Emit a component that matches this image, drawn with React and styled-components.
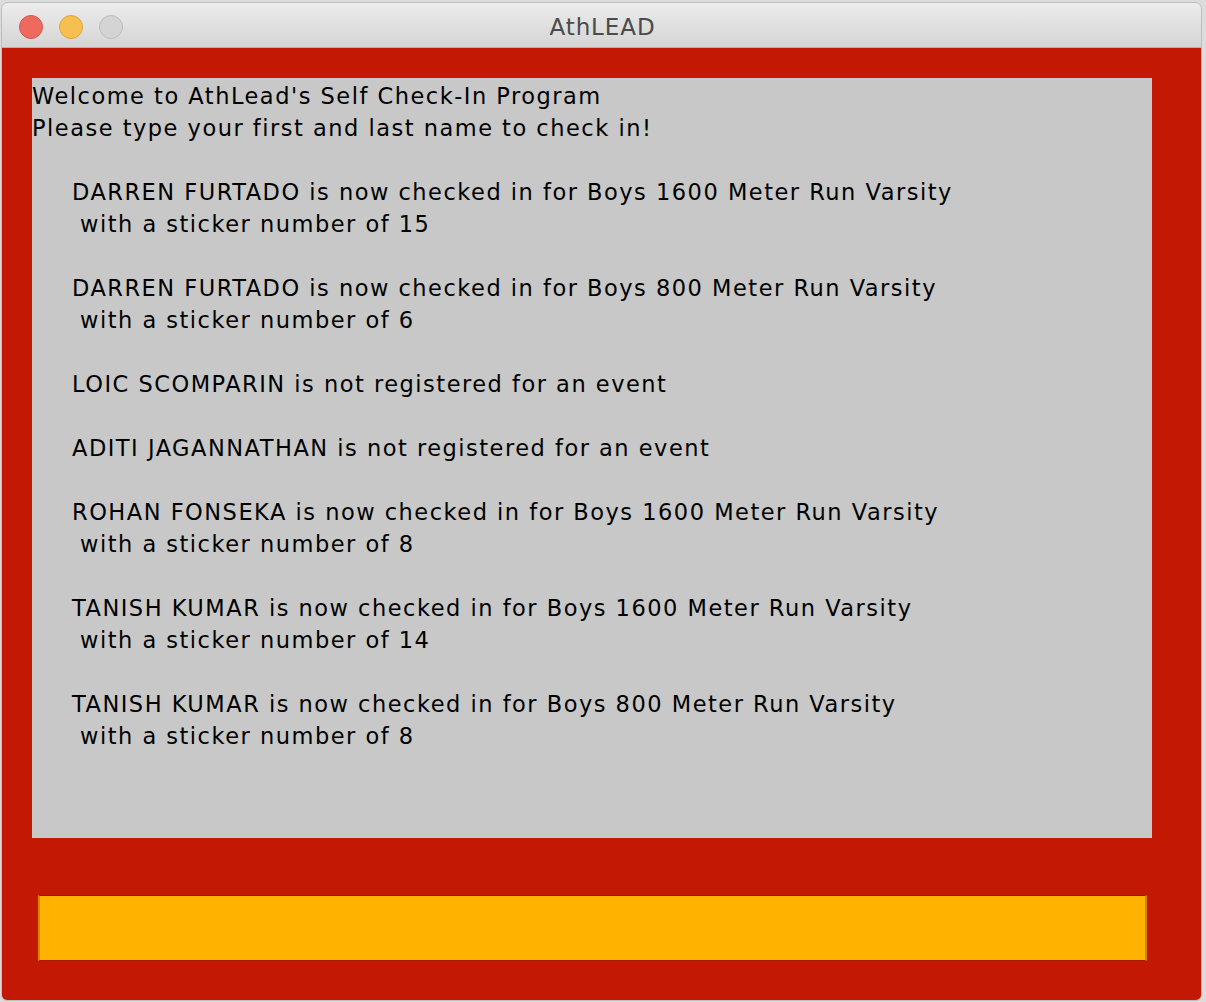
import React from "react";
import styled, { createGlobalStyle } from "styled-components";

const Global = createGlobalStyle`
  html, body { margin: 0; padding: 0; }
  body {
    background: #dcdcdc;
    width: 1206px;
    height: 1002px;
    overflow: hidden;
  }
`;

const Desktop = styled.div`
  display: flex;
  padding: 2px 4px 1px 1px;
  height: 1002px;
  box-sizing: border-box;
`;

const Window = styled.div`
  width: 1201px;
  display: flex;
  flex-direction: column;
  border-radius: 7px 7px 6px 6px;
  border: 1px solid #bdbdbd;
  overflow: hidden;
  box-sizing: border-box;
`;

const TitleBar = styled.div`
  position: relative;
  height: 44px;
  flex: none;
  background: linear-gradient(#ececec, #d5d5d5);
  border-bottom: 1px solid #b4b4b4;
  display: flex;
  align-items: center;
  justify-content: center;
`;

const Lights = styled.div`
  position: absolute;
  left: 17px;
  top: 12px;
  display: flex;
  gap: 16px;
`;

const Light = styled.span`
  width: 24px;
  height: 24px;
  border-radius: 50%;
  box-sizing: border-box;
  background: ${(p) => p.$fill};
  border: 1px solid ${(p) => p.$edge};
`;

const Title = styled.div`
  font-family: "DejaVu Sans", "Liberation Sans", sans-serif;
  font-size: 23px;
  letter-spacing: 0.9px;
  color: #4b4b4b;
  margin: 3px 0 0 2px;
`;

const Body = styled.div`
  flex: 1;
  background: #c21804;
  padding: 30px 49px 40px 30px;
  display: flex;
  flex-direction: column;
`;

const Panel = styled.div`
  width: 1120px;
  height: 760px;
  box-sizing: border-box;
  padding-top: 2px;
  background: #c8c8c8;
  font-family: "DejaVu Sans", "Liberation Sans", sans-serif;
  font-size: 22.5px;
  letter-spacing: 1.5px;
  line-height: 32px;
  color: #000;
  white-space: pre;
`;

const Line = styled.div`
  height: 32px;
  padding-left: ${(p) => p.$indent || 0}px;
`;

const Field = styled.div`
  margin: 57px 0 0 6px;
  width: 1109px;
  height: 66px;
  box-sizing: border-box;
  background: #ffb300;
  border-top: 1px solid #9e1300;
  border-bottom: 1px solid #a31a00;
  border-left: 2px solid #d98300;
  border-right: 2px solid #d98300;
`;

const entries = [
  ["DARREN FURTADO is now checked in for Boys 1600 Meter Run Varsity", "with a sticker number of 15"],
  ["DARREN FURTADO is now checked in for Boys 800 Meter Run Varsity", "with a sticker number of 6"],
  ["LOIC SCOMPARIN is not registered for an event"],
  ["ADITI JAGANNATHAN is not registered for an event"],
  ["ROHAN FONSEKA is now checked in for Boys 1600 Meter Run Varsity", "with a sticker number of 8"],
  ["TANISH KUMAR is now checked in for Boys 1600 Meter Run Varsity", "with a sticker number of 14"],
  ["TANISH KUMAR is now checked in for Boys 800 Meter Run Varsity", "with a sticker number of 8"],
];

export default function App() {
  return (
    <>
      <Global />
      <Desktop>
        <Window>
          <TitleBar>
            <Lights>
              <Light $fill="#ee6a5f" $edge="#d5574c" />
              <Light $fill="#f6bf4f" $edge="#dea53a" />
              <Light $fill="#d4d4d4" $edge="#bcbcbc" />
            </Lights>
            <Title>AthLEAD</Title>
          </TitleBar>
          <Body>
            <Panel>
              <Line>Welcome to AthLead's Self Check-In Program</Line>
              <Line>Please type your first and last name to check in!</Line>
              {entries.map((e, i) => (
                <React.Fragment key={i}>
                  <Line />
                  <Line $indent={40}>{e[0]}</Line>
                  {e[1] && <Line $indent={48}>{e[1]}</Line>}
                </React.Fragment>
              ))}
            </Panel>
            <Field />
          </Body>
        </Window>
      </Desktop>
    </>
  );
}
